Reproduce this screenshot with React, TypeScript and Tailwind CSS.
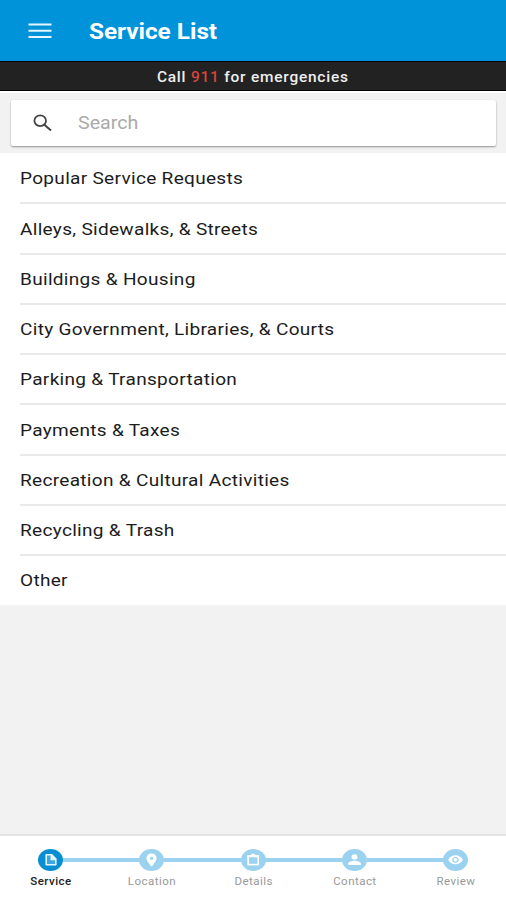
import { Fragment, type ReactNode } from "react";
import { clsx } from "clsx";

const categories = [
    "Popular Service Requests",
    "Alleys, Sidewalks, & Streets",
    "Buildings & Housing",
    "City Government, Libraries, & Courts",
    "Parking & Transportation",
    "Payments & Taxes",
    "Recreation & Cultural Activities",
    "Recycling & Trash",
    "Other",
];

const steps: { label: string; icon: ReactNode }[] = [
    {
        label: "Service",
        icon: (
            <>
                <path
                    d="M8 5.8h5.4l4 4.2v5.8H8z"
                    fill="#3ba8de"
                    stroke="#e6f5fc"
                    strokeWidth="1.5"
                    strokeLinejoin="round"
                />
                <path d="M12.2 5.4h1.6l4 4.4v1.4h-5.6z" fill="#e6f5fc" />
            </>
        ),
    },
    {
        label: "Location",
        icon: (
            <path
                d="M12.2 4.6c-2.8 0-4.9 2-4.9 4.6 0 3.3 4.9 8.2 4.9 8.2s4.9-4.9 4.9-8.2c0-2.6-2.1-4.6-4.9-4.6zm0 3.2a1.6 1.5 0 1 1 0 3 1.6 1.5 0 0 1 0-3z"
                fill="#fff"
                fillRule="evenodd"
            />
        ),
    },
    {
        label: "Details",
        icon: (
            <>
                <rect x="7" y="7" width="9.8" height="8.6" fill="none" stroke="#fff" strokeWidth="1.6" />
                <path d="M6.2 6.4h3.5c.2-1.2 1-2 2.2-2s2 .8 2.2 2h3.5v1.9H6.2z" fill="#fff" />
            </>
        ),
    },
    {
        label: "Contact",
        icon: (
            <path
                d="M12.2 5.2a2.9 2.7 0 1 1 0 5.4 2.9 2.7 0 0 1 0-5.4zM6 16v-1.4c0-1.9 3.6-2.9 6.2-2.9s6.2 1 6.2 2.9V16z"
                fill="#fff"
            />
        ),
    },
    {
        label: "Review",
        icon: (
            <>
                <path d="M5 10.8c1.4-2.9 4.1-4.5 7.2-4.5s5.8 1.6 7.2 4.5c-1.4 2.9-4.1 4.5-7.2 4.5S6.4 13.7 5 10.8z" fill="#fff" />
                <ellipse cx="12.2" cy="10.8" rx="2.6" ry="2.3" fill="#fff" stroke="#9bd2ef" strokeWidth="1.2" />
            </>
        ),
    },
];

function Header() {
    return (
        <header className="flex h-[61px] shrink-0 items-center bg-[#0093da] pt-px pl-7 text-white">
            <svg className="h-6 w-6" viewBox="0 0 24 24" aria-label="Menu">
                <path d="M.5 5.5h23M.5 11.7h23M.5 18h23" stroke="#e4f5fd" strokeWidth="1.9" />
            </svg>
            <h1 className="ml-[37px] origin-left scale-x-[1.105] whitespace-nowrap pt-px text-[22px] font-bold">
                Service List
            </h1>
        </header>
    );
}

function SearchBox() {
    return (
        <div className="shrink-0 border-t-2 border-white bg-[#f2f2f2] pt-[7px] pr-[10px] pb-[7px] pl-[11px]">
            <div className="flex h-[46px] items-center rounded-[2px] bg-white pl-[22px] shadow-[0_1px_2px_rgba(0,0,0,0.4)]">
                <svg className="h-[18px] w-[19px]" viewBox="0 0 19 18" fill="none" stroke="#444">
                    <ellipse cx="7.2" cy="6.7" rx="5.8" ry="5.4" strokeWidth="1.8" />
                    <path d="M11.4 10.7l6.6 5.9" strokeWidth="2" />
                </svg>
                <span className="ml-[26px] origin-left scale-x-[1.09] pb-[2px] text-[18px] text-[#aaa]">Search</span>
            </div>
        </div>
    );
}

function StepBar() {
    return (
        <footer className="flex h-[66px] shrink-0 items-start border-t-2 border-[#e4e4e4] bg-white pt-[13px] pl-[38.5px]">
            {steps.map((step, i) => (
                <Fragment key={step.label}>
                    {i > 0 && <div className="mt-[9px] h-1 w-[77px] shrink-0 bg-[#9bd2ef]" />}
                    <div className="flex w-[24.3px] shrink-0 flex-col items-center">
                        <svg className="h-[22px] w-[25px] shrink-0" viewBox="0 0 24.4 22" preserveAspectRatio="none">
                            <ellipse cx="12.2" cy="11" rx="12.2" ry="11" fill={i === 0 ? "#0a8ed2" : "#9bd2ef"} />
                            {step.icon}
                        </svg>
                        <span
                            className={clsx(
                                "mt-[4px] scale-x-[1.15] text-[10px] leading-[14px] tracking-[0.4px]",
                                i === 0 ? "font-medium text-[#222]" : "text-[#999]"
                            )}
                        >
                            {step.label}
                        </span>
                    </div>
                </Fragment>
            ))}
        </footer>
    );
}

export default function App() {
    return (
        <div className="flex h-screen w-full flex-col overflow-hidden bg-[#f2f2f2] font-[Roboto,sans-serif]">
            <Header />
            <div className="flex h-[30px] shrink-0 items-center justify-center border-y border-black bg-[#222] text-[#eee]">
                <p className="scale-x-[1.105] whitespace-nowrap pt-[2px] text-[14px] font-medium tracking-[0.7px]">
                    Call <span className="text-[#d8443c]">911</span> for emergencies
                </p>
            </div>
            <SearchBox />
            <ul className="h-[452px] shrink-0 bg-white pt-px pl-5">
                {categories.map((name) => (
                    <li
                        key={name}
                        className="flex h-[50.25px] items-center border-b-2 border-[#e9e9e9] pt-[2px] last:border-transparent"
                    >
                        <span className="origin-left scale-x-[1.12] whitespace-nowrap text-[17px] tracking-[0.27px] text-[#1c1c1c]">
                            {name}
                        </span>
                    </li>
                ))}
            </ul>
            <div className="flex-1" />
            <StepBar />
        </div>
    );
}
